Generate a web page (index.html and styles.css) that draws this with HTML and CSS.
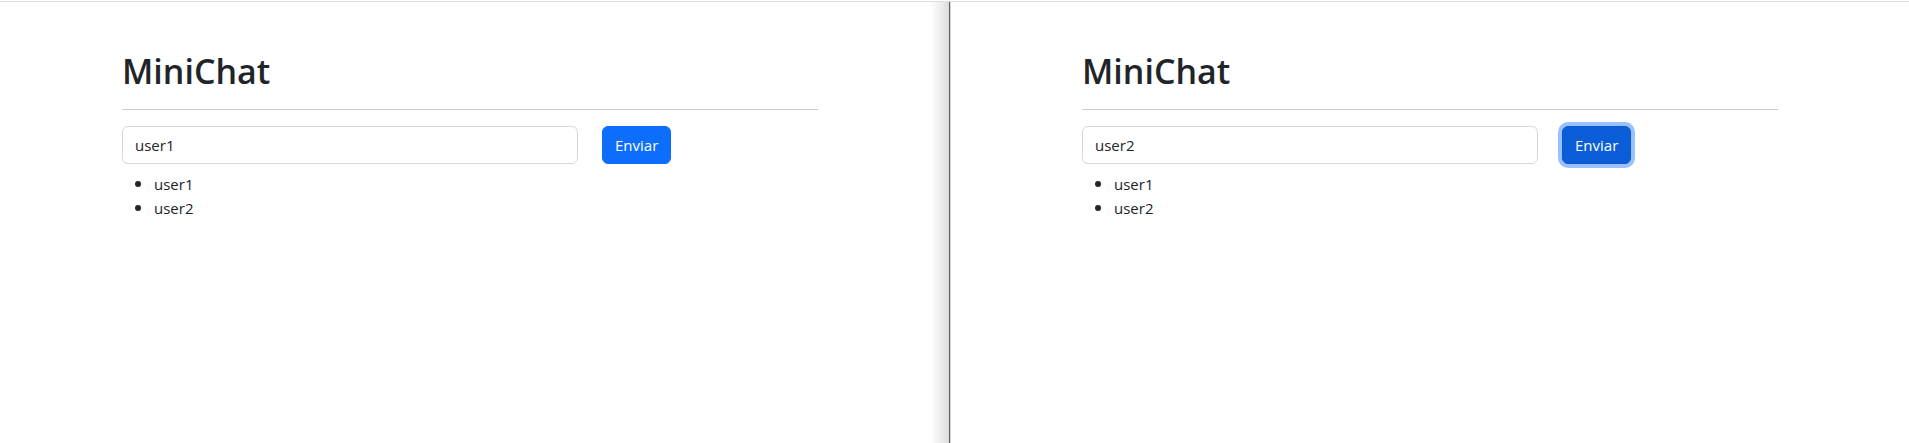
FILE: index.html
```html
<!DOCTYPE html>
<html lang="es">
<head>
<meta charset="utf-8">
<title>MiniChat</title>
<link rel="stylesheet" href="styles.css">
</head>
<body>
<div class="screen">
  <section class="pane pane-left">
    <div class="container">
      <h1 class="title">MiniChat</h1>
      <hr class="rule">
      <div class="row">
        <div class="col-8"><input class="form-control" type="text" value="user1"></div>
        <div class="col-4"><button class="btn btn-primary" type="button">Enviar</button></div>
      </div>
      <ul class="users">
        <li>user1</li>
        <li>user2</li>
      </ul>
    </div>
  </section>
  <div class="divider"></div>
  <section class="pane pane-right">
    <div class="container">
      <h1 class="title">MiniChat</h1>
      <hr class="rule">
      <div class="row">
        <div class="col-8"><input class="form-control" type="text" value="user2"></div>
        <div class="col-4"><button class="btn btn-primary is-focused" type="button">Enviar</button></div>
      </div>
      <ul class="users">
        <li>user1</li>
        <li>user2</li>
      </ul>
    </div>
  </section>
</div>
</body>
</html>
```
FILE: styles.css
```css
html, body {
  margin: 0;
  padding: 0;
  background: #fff;
  overflow: hidden;
}

body {
  font-family: "Open Sans", "Noto Sans", sans-serif;
  font-size: 15px;
  line-height: 24px;
  color: #212529;
}

.screen {
  display: flex;
  height: 441px;
  margin-top: 1px;
  border-top: 1px solid #dcdcdc;
}

.pane {
  box-sizing: border-box;
  height: 100%;
}

.pane-left {
  flex: 0 0 949px;
  padding-right: 9px;
  background: linear-gradient(to right, #fff 930px, #dedede 949px);
}

.divider {
  flex: 0 0 2px;
  background: linear-gradient(to right, #5e5e5e 0 1px, #d8d8d8 1px 2px);
}

.pane-right {
  flex: 1 1 auto;
}

.container {
  box-sizing: border-box;
  max-width: 720px;
  margin: 48px auto 0;
  padding: 0 12px;
}

.title {
  margin: 0 0 8px;
  font-size: 34px;
  font-weight: 600;
  line-height: 43px;
  color: #212529;
}

.rule {
  margin: 16px 0;
  border: 0;
  border-top: 1px solid #212529;
  opacity: .25;
}

.row {
  display: flex;
  margin: 0 -12px 8px;
}

.col-8 {
  box-sizing: border-box;
  flex: 0 0 66.6667%;
  padding: 0 12px;
}

.col-4 {
  box-sizing: border-box;
  flex: 0 0 33.3333%;
  padding: 0 12px;
}

.form-control {
  display: block;
  box-sizing: border-box;
  width: 100%;
  height: 38px;
  padding: 6px 12px;
  font-family: inherit;
  font-size: 15px;
  line-height: 24px;
  color: #212529;
  background: #fff;
  border: 1px solid #d4d8dd;
  border-radius: 6px;
  outline: none;
}

.btn {
  box-sizing: border-box;
  height: 38px;
  padding: 6px 12px;
  font-family: inherit;
  font-size: 15px;
  line-height: 24px;
  border-radius: 6px;
  cursor: pointer;
}

.btn-primary {
  color: #fff;
  background: #0d6efd;
  border: 1px solid #0d6efd;
}

.btn-primary.is-focused {
  background: #0b5ed7;
  border-color: #0a58ca;
  box-shadow: 0 0 0 4px rgba(49, 132, 253, .5);
}

.users {
  margin: 0 0 16px;
  padding-left: 32px;
}

.users li::marker {
  font-size: 17px;
}
```
